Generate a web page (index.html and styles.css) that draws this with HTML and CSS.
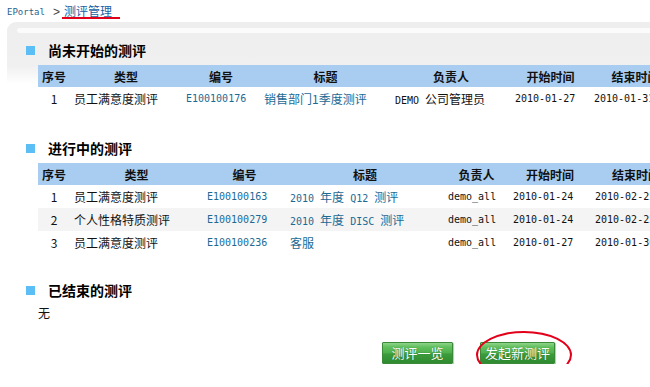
FILE: index.html
```html
<!DOCTYPE html>
<html lang="zh-CN">
<head>
<meta charset="utf-8">
<title>测评管理</title>
<link rel="stylesheet" href="styles.css">
</head>
<body>
<div class="crumb"><span class="ep">EPortal</span><span class="sep">&gt;</span><span class="cur">测评管理</span></div>

<div class="panel">
  <div class="band"></div>
  <section class="sec first">
    <h2 class="sec-title"><i class="sq"></i>尚未开始的测评</h2>
    <table class="grid t1">
      <colgroup><col class="c1"><col class="c2"><col class="c3"><col class="c4"><col class="c5"><col class="c6"><col class="c7"></colgroup>
      <thead><tr><th>序号</th><th>类型</th><th>编号</th><th>标题</th><th>负责人</th><th>开始时间</th><th>结束时间</th></tr></thead>
      <tbody>
        <tr><td class="num">1</td><td>员工满意度测评</td><td class="link m">E100100176</td><td class="link">销售部门1季度测评</td><td><span class="m">DEMO </span>公司管理员</td><td class="m">2010-01-27</td><td class="m">2010-01-31</td></tr>
      </tbody>
    </table>
  </section>
</div>

<section class="sec">
  <h2 class="sec-title"><i class="sq"></i>进行中的测评</h2>
  <table class="grid t2">
    <colgroup><col class="c1"><col class="c2"><col class="c3"><col class="c4"><col class="c5"><col class="c6"><col class="c7"></colgroup>
    <thead><tr><th>序号</th><th>类型</th><th>编号</th><th>标题</th><th>负责人</th><th>开始时间</th><th>结束时间</th></tr></thead>
    <tbody>
      <tr><td class="num">1</td><td>员工满意度测评</td><td class="link m">E100100163</td><td class="link"><span class="m">2010 </span>年度<span class="m"> Q12 </span>测评</td><td class="m">demo_all</td><td class="m">2010-01-24</td><td class="m">2010-02-25</td></tr>
      <tr class="alt"><td class="num">2</td><td>个人性格特质测评</td><td class="link m">E100100279</td><td class="link"><span class="m">2010 </span>年度<span class="m"> DISC </span>测评</td><td class="m">demo_all</td><td class="m">2010-01-24</td><td class="m">2010-02-25</td></tr>
      <tr><td class="num">3</td><td>员工满意度测评</td><td class="link m">E100100236</td><td class="link">客服</td><td class="m">demo_all</td><td class="m">2010-01-27</td><td class="m">2010-01-30</td></tr>
    </tbody>
  </table>
</section>

<section class="sec last">
  <h2 class="sec-title"><i class="sq"></i>已结束的测评</h2>
  <p class="none">无</p>
</section>

<div class="actions">
  <button class="btn b1" type="button">测评一览</button>
  <div class="mark">
    <button class="btn b2" type="button">发起新测评</button>
    <span class="ring"></span>
  </div>
</div>
</body>
</html>
```

FILE: styles.css
```css
html, body {
  margin: 0;
  padding: 0;
  overflow: hidden;
  background: #fff;
}
body {
  font-family: "Noto Sans CJK SC", "Noto Sans", sans-serif;
  font-size: 12px;
  color: #111;
  width: 650px;
}

/* breadcrumb */
.crumb {
  height: 22px;
  display: flex;
  align-items: center;
  padding-left: 7px;
  padding-top: 1px;
  box-sizing: border-box;
  color: #2a5d8a;
}
.ep {
  font-family: "DejaVu Sans Mono", monospace;
  font-size: 9px;
  color: #2b5f8e;
}
.sep {
  font-family: "Liberation Sans", sans-serif;
  font-size: 12px;
  color: #444;
  margin: 0 2px 0 8px;
}
.cur {
  display: inline-block;
  line-height: 13px;
  padding: 0 8px 0 2px;
  color: #1b5fa3;
  border-bottom: 2px solid #e3001b;
}

/* top gray panel */
.panel {
  margin-left: 7px;
  padding-top: 6px;
  border-top-left-radius: 9px;
  background: linear-gradient(to bottom, #eeeeee 0, #f0f0f0 44px, #ffffff 62px);
}
.band {
  height: 5px;
  margin-left: 10px;
  background: #fbfbfb;
  border-radius: 3px 0 0 3px;
}
.sec.first {
  margin-left: -7px;
  padding-top: 7px;
}
.sec { margin-top: 28px; }
.sec.first { margin-top: 0; }
.sec.last { margin-top: 26px; }

.sec-title {
  margin: 0;
  height: 20px;
  display: flex;
  align-items: center;
  padding-left: 26px;
  font-size: 14px;
  font-weight: bold;
  color: #000;
}
.sq {
  width: 9px;
  height: 9px;
  background: #5bbff5;
  margin-right: 13px;
}

/* tables */
.grid {
  margin: 5px 0 0 38px;
  border-collapse: collapse;
  table-layout: fixed;
  width: 643px;
}
.grid th {
  height: 22px;
  padding: 0;
  background: #a9cdf0;
  font-weight: bold;
  text-align: center;
  color: #111;
}
.grid td {
  height: 23px;
  padding: 0 4px;
  white-space: pre;
  overflow: hidden;
  background: #fff;
  color: #111;
}
.grid tr.alt td { background: #f4f4f4; }
.grid td.num { text-align: center; }
.grid td.link { color: #1c6a94; }
.m {
  font-family: "DejaVu Sans Mono", monospace;
  font-size: 10px;
}

.t1 .c1 { width: 32px; }
.t1 .c2 { width: 112px; }
.t1 .c3 { width: 78px; }
.t1 .c4 { width: 131px; }
.t1 .c5 { width: 120px; }
.t1 .c6 { width: 79px; }
.t1 .c7 { width: 91px; }

.t2 .c1 { width: 32px; }
.t2 .c2 { width: 133px; }
.t2 .c3 { width: 83px; }
.t2 .c4 { width: 158px; }
.t2 .c5 { width: 65px; }
.t2 .c6 { width: 82px; }
.t2 .c7 { width: 90px; }

.none {
  margin: 5px 0 0 38px;
  line-height: 16px;
}

/* buttons */
.actions {
  display: flex;
  gap: 27px;
  margin-top: 21px;
  padding-left: 382px;
}
.mark { position: relative; }
.btn {
  height: 22px;
  padding: 0;
  border: 1px solid #3a8a3a;
  border-radius: 1px;
  font-family: "Noto Sans CJK SC", sans-serif;
  font-size: 13px;
  line-height: 20px;
  color: #fff;
  text-shadow: 0 0 1px rgba(0, 60, 0, .6);
  background: linear-gradient(to bottom, #8fd389 0, #62c05e 20%, #4fb04d 48%, #3c9c3b 55%, #2f8a30 100%);
  box-shadow: 1px 1px 1px rgba(0, 0, 0, .25);
}
.b1 { width: 71px; }
.b2 { width: 75px; }
.ring {
  position: absolute;
  left: -4px;
  top: -11px;
  width: 92px;
  height: 44px;
  border: 2px solid #e3001b;
  border-radius: 50%;
  pointer-events: none;
}
```
